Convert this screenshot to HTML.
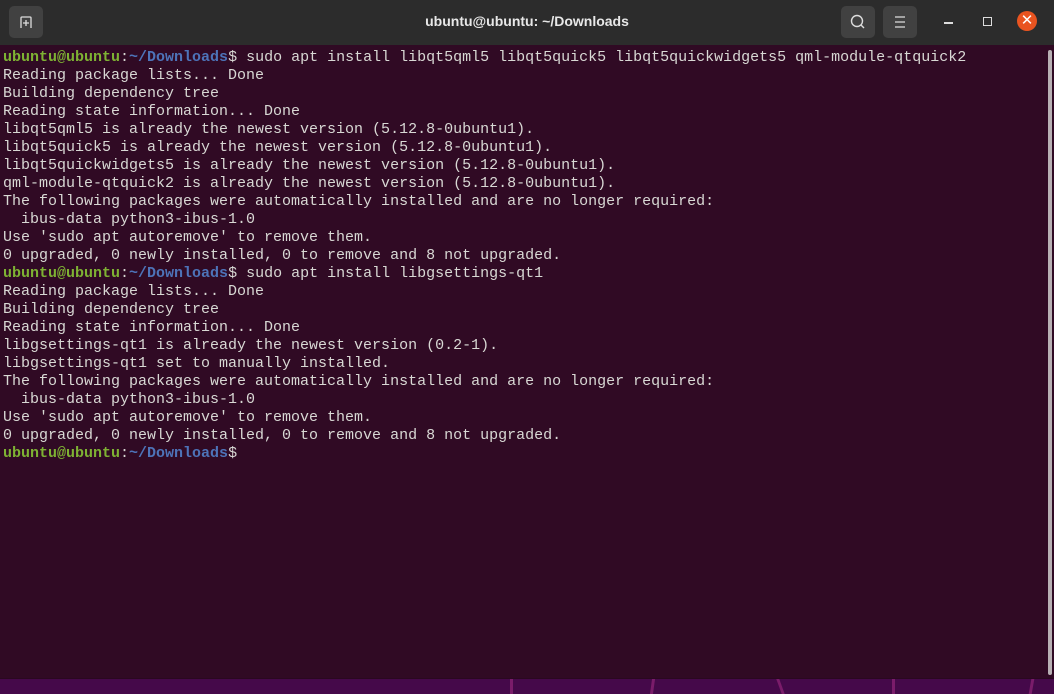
<!DOCTYPE html>
<html><head><style>
body{margin:0;width:1054px;height:694px;background:#45094a;overflow:hidden;position:relative;font-family:"Liberation Sans",sans-serif}
.win{position:absolute;left:0;top:0;width:1054px;height:678px;background:#300a24;border-bottom:1px solid #2a0820}
.tb{position:absolute;left:0;top:0;width:1054px;height:45px;background:#2c2c2c}
.title{position:absolute;left:0;right:0;top:13px;text-align:center;color:#e8e8e8;font-weight:bold;font-size:14px}
.btn{position:absolute;top:6px;width:34px;height:32px;border-radius:5px;background:#414141}
pre{position:absolute;left:3px;top:49px;margin:0;font-family:"Liberation Mono",monospace;font-size:15px;line-height:18px;color:#d8d8d4}
.g{color:#7eb233;font-weight:bold}.b{color:#4d73b8;font-weight:bold}
.sb{position:absolute;left:1048px;top:50px;width:4px;height:625px;background:#b8b0b4;border-radius:2px}
.ln{position:absolute;top:679px;width:3px;height:15px;background:#7a1c6a}
</style></head><body>
<div class="win">
<div class="tb">
<div class="btn" style="left:9px"><svg width="34" height="32"><path d="M12 22V12q0-1 1-1h8q1 0 1 1v10M14 17h6M17 14v6" stroke="#ddd" stroke-width="1.3" fill="none"/></svg></div>
<div class="title">ubuntu@ubuntu: ~/Downloads</div>
<div class="btn" style="left:841px"><svg width="34" height="32"><circle cx="16" cy="15" r="5.5" stroke="#ddd" stroke-width="1.4" fill="none"/><path d="M20 19l3 3" stroke="#ddd" stroke-width="1.4"/></svg></div>
<div class="btn" style="left:883px"><svg width="34" height="32"><path d="M12 11h10M12 16h10M12 21h10" stroke="#ddd" stroke-width="1.3"/></svg></div>
<div style="position:absolute;left:944px;top:22px;width:9px;height:1.5px;background:#ddd"></div>
<div style="position:absolute;left:983px;top:17px;width:7px;height:7px;border:1.3px solid #ddd"></div>
<div style="position:absolute;left:1017px;top:11px;width:20px;height:20px;border-radius:50%;background:#e95420;color:#fff;font-size:15px;text-align:center;line-height:20px">✕</div>
</div>
<pre><span class="g">ubuntu@ubuntu</span>:<span class="b">~/Downloads</span>$ sudo apt install libqt5qml5 libqt5quick5 libqt5quickwidgets5 qml-module-qtquick2
Reading package lists... Done
Building dependency tree
Reading state information... Done
libqt5qml5 is already the newest version (5.12.8-0ubuntu1).
libqt5quick5 is already the newest version (5.12.8-0ubuntu1).
libqt5quickwidgets5 is already the newest version (5.12.8-0ubuntu1).
qml-module-qtquick2 is already the newest version (5.12.8-0ubuntu1).
The following packages were automatically installed and are no longer required:
  ibus-data python3-ibus-1.0
Use 'sudo apt autoremove' to remove them.
0 upgraded, 0 newly installed, 0 to remove and 8 not upgraded.
<span class="g">ubuntu@ubuntu</span>:<span class="b">~/Downloads</span>$ sudo apt install libgsettings-qt1
Reading package lists... Done
Building dependency tree
Reading state information... Done
libgsettings-qt1 is already the newest version (0.2-1).
libgsettings-qt1 set to manually installed.
The following packages were automatically installed and are no longer required:
  ibus-data python3-ibus-1.0
Use 'sudo apt autoremove' to remove them.
0 upgraded, 0 newly installed, 0 to remove and 8 not upgraded.
<span class="g">ubuntu@ubuntu</span>:<span class="b">~/Downloads</span>$ </pre>
<div class="sb"></div>
</div>
<div class="ln" style="left:510px"></div>
<div class="ln" style="left:651px;transform:skewX(-8deg)"></div>
<div class="ln" style="left:779px;transform:skewX(20deg)"></div>
<div class="ln" style="left:892px"></div>
<div class="ln" style="left:1030px;transform:skewX(-10deg)"></div>
</body></html>
